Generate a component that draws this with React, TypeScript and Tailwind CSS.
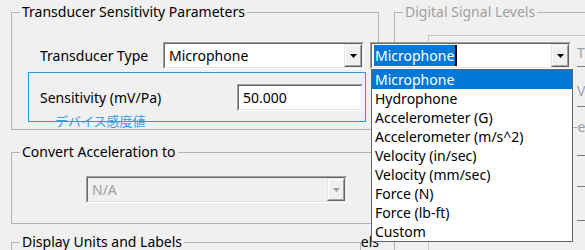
import React from "react";

const font = "font-['Segoe_UI','Noto_Sans','Noto_Sans_CJK_JP',sans-serif]";

const items = [
  "Microphone",
  "Hydrophone",
  "Accelerometer (G)",
  "Accelerometer (m/s^2)",
  "Velocity (in/sec)",
  "Velocity (mm/sec)",
  "Force (N)",
  "Force (lb-ft)",
  "Custom",
];

// classic sunken 3D frame
const Sunken = ({ className = "", inner = "", children }: { className?: string; inner?: string; children?: React.ReactNode }) => (
  <div className={`border border-t-[#a0a0a0] border-l-[#a0a0a0] border-b-white border-r-white ${className}`}>
    <div className={`h-full border border-t-[#696969] border-l-[#696969] border-b-[#e3e3e3] border-r-[#e3e3e3] ${inner}`}>
      {children}
    </div>
  </div>
);

const ArrowButton = ({ disabled = false }: { disabled?: boolean }) => (
  <div className="h-full w-[18px] shrink-0 border border-t-[#e3e3e3] border-l-[#e3e3e3] border-b-[#696969] border-r-[#696969]">
    <div className="h-full flex items-center justify-center bg-[#f0f0f0] border border-t-white border-l-white border-b-[#a0a0a0] border-r-[#a0a0a0]">
      <svg width="7" height="4" viewBox="0 0 7 4">
        <polygon points="0,0 7,0 3.5,4" fill={disabled ? "#a0a0a0" : "#000"} />
      </svg>
    </div>
  </div>
);

const GroupBox = ({ title, className = "", children }: { title: string; className?: string; children?: React.ReactNode }) => (
  <fieldset className={`border border-[#b4b4b4] ${className}`}>
    <legend className="ml-[8px] px-[2px] leading-[20px]">{title}</legend>
    {children}
  </fieldset>
);

export default function App() {
  return (
    <div className={`relative w-[585px] h-[250px] overflow-hidden bg-[#f0f0f0] text-[14px] text-black ${font}`}>
      <div className="flex">
        {/* Left column */}
        <div className="ml-[11px] w-[368px] shrink-0 flex flex-col">
          <GroupBox title="Transducer Sensitivity Parameters" className="mt-[2px] h-[128px]">
            <div className="pt-[20px] flex items-center h-[47px]">
              <span className="ml-[28px] w-[123px]">Transducer Type</span>
              <Sunken className="w-[201px] h-[27px] bg-white" inner="flex items-center">
                <span className="flex-1 pl-[4px]">Microphone</span>
                <ArrowButton />
              </Sunken>
            </div>
            <div className="relative ml-[16px] mt-[3px] w-[338px] h-[50px] border border-[#2d9bd8] flex items-center">
              <span className="ml-[11px] w-[197px]">Sensitivity (mV/Pa)</span>
              <Sunken className="w-[126px] h-[27px] bg-white" inner="flex items-center">
                <span className="pl-[4px]">50.000</span>
              </Sunken>
              <span className="absolute left-[26px] top-[40px] leading-[16px] text-[13px] text-[#3c9be0] font-['Noto_Sans_CJK_JP',sans-serif]">
                デバイス感度値
              </span>
            </div>
          </GroupBox>

          <GroupBox title="Convert Acceleration to" className="mt-[12px] h-[82px]">
            <div className="pt-[14px] pl-[74px]">
              <Sunken className="w-[261px] h-[27px] bg-[#f0f0f0]" inner="flex items-center">
                <span className="flex-1 pl-[4px] text-[#a0a0a0]">N/A</span>
                <ArrowButton disabled />
              </Sunken>
            </div>
          </GroupBox>

          <div className="flex mt-[8px]">
            <GroupBox title="Display Units and Labels" className="w-[356px] h-[40px]" />
            <span className="leading-[20px]">els</span>
          </div>
        </div>

        {/* Right column (mostly hidden behind the open list) */}
        <div className="ml-[15px] w-[260px] shrink-0">
          <GroupBox title="Digital Signal Levels" className="mt-[2px] h-[260px] text-[#a0a0a0]">
            <div className="ml-[33px] mt-[13px] h-[220px] border-t border-l border-[#c8c8c8]">
              <div className="ml-[148px] flex flex-col text-[#a0a0a0]">
                <span className="leading-[16px] mt-[9px]">T</span>
                <div className="mt-[5px] h-[2px] border-t border-[#7a7a7a]" />
                <span className="leading-[16px] mt-[15px]">V</span>
                <div className="mt-[7px] h-[2px] border-t border-[#7a7a7a]" />
                <span className="leading-[16px] mt-[11px] ml-[-4px]">-e</span>
                <div className="mt-[20px] h-[2px] border-t border-[#7a7a7a]" />
                <div className="mt-[29px] h-[2px] border-t border-[#7a7a7a]" />
                <div className="mt-[32px] h-[2px] border-t border-[#7a7a7a]" />
              </div>
            </div>
          </GroupBox>
        </div>
      </div>

      {/* Open combo box with drop-down list */}
      <div className="absolute left-[370px] top-[42px] z-10">
        <Sunken className="w-[201px] h-[27px] bg-white" inner="flex items-center">
          <div className="flex-1 flex items-center pl-[2px]">
            <span className="bg-[#0078d7] text-white leading-[21px] px-[1px]">Microphone</span>
            <span className="w-[2px] h-[21px] bg-black" />
          </div>
          <ArrowButton />
        </Sunken>
        <div className="ml-[1px] w-[202px] border border-[#646464] bg-white">
          {items.map((it, i) => (
            <div
              key={it}
              className={`h-[19px] leading-[20px] pl-[3px] ${i === 0 ? "bg-[#0078d7] text-white" : "text-black"}`}
            >
              {it}
            </div>
          ))}
        </div>
      </div>
    </div>
  );
}
